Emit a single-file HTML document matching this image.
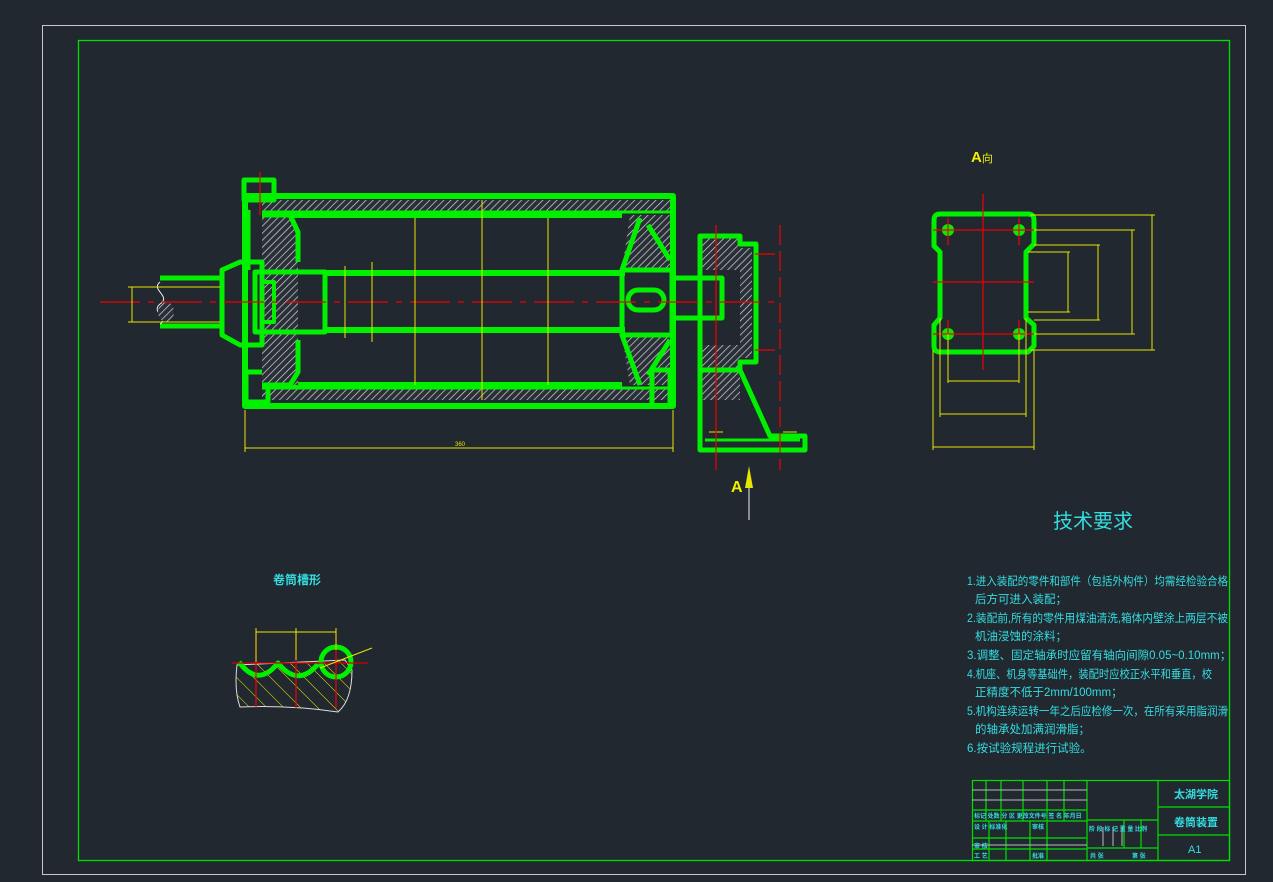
<!DOCTYPE html>
<html><head><meta charset="utf-8">
<style>
html,body{margin:0;padding:0;background:#212830;width:1273px;height:882px;overflow:hidden}
svg{display:block}
.g{fill:none;stroke:#00f000;stroke-linejoin:round}
.y{stroke:#e6e600;stroke-width:1;fill:none}
.r{stroke:#f00000;stroke-width:1.2}
.t{font-family:"Liberation Sans","Noto Sans CJK SC",sans-serif;fill:#33dde0}
</style></head><body>
<svg width="1273" height="882" viewBox="0 0 1273 882">
<defs>
<pattern id="h" width="5" height="5" patternUnits="userSpaceOnUse" patternTransform="rotate(45)">
<rect width="5" height="5" fill="#2a3038"/><line x1="0" y1="0" x2="0" y2="5" stroke="#d8d8d8" stroke-width="1.4"/></pattern>
<pattern id="hy" width="12" height="12" patternUnits="userSpaceOnUse" patternTransform="rotate(-45)">
<line x1="0" y1="0" x2="0" y2="12" stroke="#e6e600" stroke-width="1"/></pattern>
</defs>
<rect x="42.5" y="25.5" width="1203" height="849" fill="none" stroke="#c8c8c8" stroke-width="1"/>
<rect x="78.5" y="40.5" width="1151" height="820" fill="none" stroke="#00e000" stroke-width="1.3"/>

<rect x="262" y="200" width="408" height="12" fill="url(#h)"/>
<rect x="262" y="388" width="408" height="12" fill="url(#h)"/>
<rect x="245" y="196" width="428" height="210" class="g" stroke-width="6"/>
<line x1="262" y1="215" x2="622" y2="215" class="g" stroke-width="6"/>
<line x1="262" y1="385" x2="622" y2="385" class="g" stroke-width="6"/>
<line x1="262" y1="212" x2="670" y2="212" class="g" stroke-width="3"/>
<line x1="262" y1="388" x2="670" y2="388" class="g" stroke-width="3"/>
<rect x="244" y="180" width="30" height="20" fill="url(#h)" class="g" stroke-width="5"/>
<rect x="246" y="372" width="22" height="30" class="g" stroke-width="5"/>
<path d="M262 216 L292 216 L292 228 L298 232 L298 322 L262 322 Z" fill="url(#h)"/>
<path d="M262 280 L298 280 L298 385 L262 385 Z" fill="url(#h)"/>
<path d="M248 210 L248 270 M262 215 L290 215 L298 232 L298 262 M298 340 L298 372 L290 385 L262 385" class="g" stroke-width="5"/>
<path d="M222 270 L240 262 L262 262 L262 345 L240 345 L222 335 Z" fill="url(#h)" class="g" stroke-width="5"/>
<rect x="255" y="272" width="70" height="60" class="g" stroke-width="5"/>
<rect x="262" y="282" width="12" height="40" class="g" stroke-width="4"/>
<path d="M160 278 L222 278 M160 326 L222 326" class="g" stroke-width="5"/>
<path d="M160 282 C150 290 172 296 160 304 C150 312 170 318 160 324" fill="none" stroke="#eee" stroke-width="1"/>
<ellipse cx="166" cy="312" rx="8" ry="10" fill="url(#h)"/>
<line x1="325" y1="273" x2="625" y2="273" class="g" stroke-width="6"/>
<line x1="325" y1="330" x2="625" y2="330" class="g" stroke-width="6"/>
<path d="M630 215 L670 215 L670 270 L622 270 Z" fill="url(#h)"/>
<path d="M622 335 L670 335 L670 385 L630 385 Z" fill="url(#h)"/>
<path d="M640 218 L622 270 L622 335 L640 385 M648 225 L670 260 M648 375 L670 340" class="g" stroke-width="5"/>
<rect x="622" y="270" width="50" height="65" class="g" stroke-width="5"/>
<rect x="628" y="290" width="36" height="20" rx="10" class="g" stroke-width="5"/>
<rect x="652" y="370" width="18" height="36" class="g" stroke-width="5"/>
<rect x="672" y="278" width="50" height="40" class="g" stroke-width="5"/>
<path d="M702 238 L740 238 L740 270 L702 270 Z M702 345 L740 345 L740 400 L702 400 Z" fill="url(#h)"/>
<path d="M700 236 L740 236 L740 244 L756 244 L756 362 L740 362 L740 370 L700 370 Z" class="g" stroke-width="5"/>
<rect x="740" y="248" width="12" height="110" fill="url(#h)"/>
<path d="M700 370 L700 450 L805 450 L805 436 L770 436 L740 370" class="g" stroke-width="5"/>
<line x1="705" y1="440" x2="800" y2="440" class="g" stroke-width="3"/>
<path d="M709 432 L723 432 M783 432 L797 432" class="y"/>
<line x1="100" y1="302" x2="780" y2="302" class="r" stroke-dasharray="40 8 6 8"/>
<line x1="260" y1="172" x2="260" y2="215" class="r"/>
<line x1="716" y1="225" x2="716" y2="470" class="r"/>
<line x1="780" y1="225" x2="780" y2="470" class="r" stroke-dasharray="20 6"/>
<line x1="755" y1="254" x2="775" y2="254" class="r"/><line x1="755" y1="350" x2="775" y2="350" class="r"/>
<path d="M132 287 L132 322 M128 287 L220 287 M128 322 L220 322" class="y"/>
<path d="M245 410 L245 452 M673 410 L673 452 M245 448 L673 448" class="y"/>
<path d="M415 218 L415 385 M482 200 L482 400 M548 218 L548 385 M345 266 L345 338 M372 262 L372 342" class="y"/>
<text x="455" y="446" font-size="6" fill="#e6e600" font-family="Liberation Sans">360</text>
<line x1="749" y1="470" x2="749" y2="520" stroke="#eee" stroke-width="1"/>
<path d="M745 488 L749 466 L753 488 Z" fill="#e6e600"/>
<text x="731" y="492" font-size="16" font-weight="bold" fill="#f0f000" font-family="Liberation Sans">A</text>

<text x="971" y="162" font-size="15" font-weight="bold" fill="#f0f000" font-family="Liberation Sans,Noto Sans CJK SC,sans-serif">A<tspan font-size="11" font-weight="normal">向</tspan></text>
<path d="M940 214 L1028 214 Q1034 214 1034 220 L1034 244 L1026 252 L1026 318 L1034 325 L1034 346 L1028 352 L940 352 Q934 352 934 346 L934 325 L940 318 L940 252 L934 246 L934 220 Q934 214 940 214 Z" class="g" stroke-width="5"/>
<circle cx="948" cy="230" r="6" fill="#00f000"/><circle cx="1019" cy="230" r="6" fill="#00f000"/>
<circle cx="948" cy="334" r="6" fill="#00f000"/><circle cx="1019" cy="334" r="6" fill="#00f000"/>
<path d="M933 230 L1034 230 M933 282 L1034 282 M933 334 L1034 334 M983 194 L983 370 M948 218 L948 245 M1019 218 L1019 245 M948 320 L948 345 M1019 320 L1019 345" class="r"/>
<path d="M1030 215 L1155 215 M1152 215 L1152 350 M1030 350 L1155 350 M1034 230 L1135 230 M1132 230 L1132 334 M1034 334 L1135 334 M1034 245 L1100 245 M1098 245 L1098 320 M1034 320 L1100 320 M1028 252 L1070 252 M1068 252 L1068 312 M1028 312 L1070 312" class="y"/>
<path d="M948 334 L948 383 M1019 334 L1019 383 M948 381 L1019 381 M940 318 L940 417 M1026 318 L1026 417 M940 414 L1026 414 M933 350 L933 450 M1034 350 L1034 450 M933 447 L1034 447" class="y"/>

<text x="273" y="584" class="t" font-size="12" font-weight="bold">卷筒槽形</text>
<path d="M237 665 Q234 690 240 707 Q290 705 338 712 Q352 700 352 670 L345 660 L237 665 Z" fill="url(#hy)" stroke="#ddd" stroke-width="1"/>
<path d="M239 662 Q258 688 278 663 Q298 688 318 664" class="g" stroke-width="5"/>
<circle cx="336" cy="662" r="15" class="g" stroke-width="5"/>
<path d="M256 632 L256 708 M296 632 L296 708 M336 632 L336 708" class="r"/>
<line x1="232" y1="663" x2="368" y2="663" stroke="#cc0000" stroke-width="1.2"/>
<path d="M256 632 L336 632 M256 628 L256 662 M296 628 L296 660 M336 628 L336 650 M320 668 L372 648" class="y"/>

<text x="1053" y="528" class="t" font-size="20">技术要求</text>
<g class="t" font-size="11.5">
<text x="967" y="585" textLength="261" lengthAdjust="spacingAndGlyphs">1.进入装配的零件和部件（包括外构件）均需经检验合格</text>
<text x="975" y="603">后方可进入装配；</text>
<text x="967" y="622" textLength="261" lengthAdjust="spacingAndGlyphs">2.装配前,所有的零件用煤油清洗,箱体内壁涂上两层不被</text>
<text x="975" y="640">机油浸蚀的涂料；</text>
<text x="967" y="659">3.调整、固定轴承时应留有轴向间隙0.05~0.10mm；</text>
<text x="967" y="678" textLength="245" lengthAdjust="spacingAndGlyphs">4.机座、机身等基础件，装配时应校正水平和垂直，校</text>
<text x="975" y="696">正精度不低于2mm/100mm；</text>
<text x="967" y="715" textLength="261" lengthAdjust="spacingAndGlyphs">5.机构连续运转一年之后应检修一次，在所有采用脂润滑</text>
<text x="975" y="733">的轴承处加满润滑脂；</text>
<text x="967" y="752">6.按试验规程进行试验。</text>
</g>

<g stroke="#00e000" stroke-width="1.2" fill="none">
<rect x="972.5" y="780.5" width="257" height="80"/>
<line x1="1087" y1="780" x2="1087" y2="860"/>
<line x1="1158" y1="780" x2="1158" y2="860"/>
<line x1="1158" y1="807" x2="1229" y2="807"/>
<line x1="1158" y1="835" x2="1229" y2="835"/>
<line x1="1087" y1="820" x2="1158" y2="820"/>
<line x1="1087" y1="848" x2="1158" y2="848"/>
<line x1="972" y1="810" x2="1087" y2="810"/>
<line x1="972" y1="821" x2="1087" y2="821"/>
<line x1="972" y1="838" x2="1087" y2="838"/>
<line x1="972" y1="849" x2="1087" y2="849"/>
<path d="M986 780 V821 M1001 780 V821 M1023 780 V821 M1047 780 V821 M1064 780 V821 M989 821 V860 M1006 821 V860 M1030 821 V860 M1047 821 V860 M1124 820 V848 M1141 820 V848"/>
</g>
<path d="M972 790 L1087 790 M972 800 L1087 800 M972 845 L1087 845 M1103 827 V846 M1113 827 V846 M1122 827 V846" stroke="#bbb" stroke-width="1"/>
<g class="t" font-size="6" font-weight="bold">
<text x="974" y="818">标记 处数 分 区 更改文件号 签 名 年月日</text>
<text x="974" y="829">设 计 标准化</text><text x="1032" y="829">审核</text>
<text x="1089" y="831">阶 段 标 记 重 量 比例</text>
<text x="974" y="848">审 核</text><text x="974" y="858">工 艺</text><text x="1032" y="858">批准</text>
<text x="1090" y="858">共 张</text><text x="1132" y="858">第 张</text>
</g>
<text x="1174" y="798" class="t" font-size="11" font-weight="bold">太湖学院</text>
<text x="1174" y="826" class="t" font-size="11" font-weight="bold">卷筒装置</text>
<text x="1188" y="853" class="t" font-size="11">A1</text>
</svg>
</body></html>
